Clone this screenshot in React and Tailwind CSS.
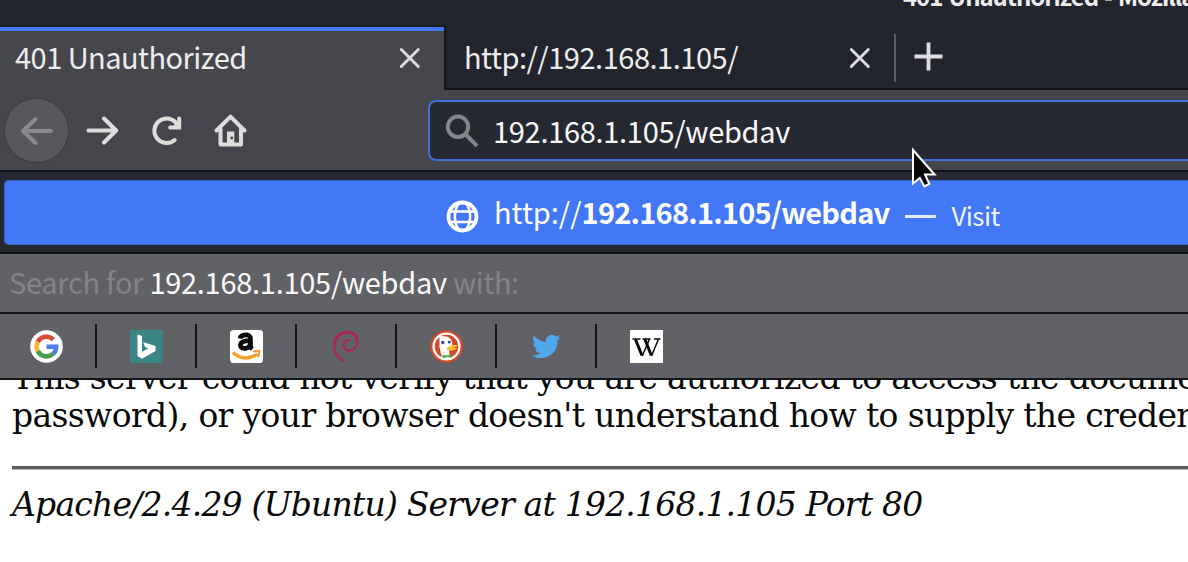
import React from "react";

const ui = "font-['Noto_Sans_CJK_SC','Noto_Sans',sans-serif]";

function Cross() {
  return (
    <svg width="22" height="22" viewBox="0 0 22 22" fill="none" stroke="#dcdcdd" strokeWidth="2.9" strokeLinecap="round">
      <path d="M2.3 2.5 19.3 19.5M19.3 2.5 2.3 19.5" />
    </svg>
  );
}

function TitleBar() {
  return (
    <div className={`h-[25px] overflow-hidden bg-[#23252e] pl-[903px] text-[24px] font-bold leading-[36px] tracking-[-1.05px] [word-spacing:1.5px] text-[#eeeeef] ${ui}`}>
      <div className="-mt-[22px] whitespace-nowrap">401 Unauthorized - Mozilla Firefox</div>
    </div>
  );
}

function Tabs() {
  return (
    <div className={`flex h-[65px] bg-[#23252e] text-[29px] leading-[40px] text-[#ededee] ${ui}`}>
      <div className="flex h-[65px] w-[444px] shrink-0 flex-col border-t-2 border-[#1b1c22] bg-[#45474c]">
        <div className="h-[4px] shrink-0 bg-[#4379f6]" />
        <div className="flex items-start justify-between pl-[15px] pr-[23px] pt-[5px]">
          <span className="whitespace-nowrap tracking-[-0.53px]">401 Unauthorized</span>
          <div className="pt-[11px]"><Cross /></div>
        </div>
      </div>
      <div className="flex grow border-b-2 border-l-2 border-[#15161b]">
        <div className="flex h-[62px] w-[425px] items-start justify-between pl-[18px] pt-[11px]">
          <span className="whitespace-nowrap tracking-[-0.48px]">http://192.168.1.105/</span>
          <div className="pt-[11px]"><Cross /></div>
        </div>
        <div className="ml-[23px] mt-[9px] h-[48px] w-[2px] bg-[#5b5d63]" />
        <svg className="ml-[18px] mt-[17px]" width="30" height="30" viewBox="0 0 30 30" stroke="#dededf" strokeWidth="3.8">
          <path d="M14.500 .5v28M.5 14.500h28" />
        </svg>
      </div>
    </div>
  );
}

function Toolbar() {
  return (
    <div className={`flex h-[80px] items-start bg-[#44464c] ${ui}`}>
      <div className="ml-[4px] mt-[8px] flex size-[65px] shrink-0 items-center justify-center rounded-full border border-[#3b3d42] bg-[#57585c]">
        <svg width="34" height="30" viewBox="0 0 34 30" fill="none" stroke="#898a8d" strokeWidth="4" strokeLinecap="round" strokeLinejoin="round">
          <path d="M31 15H3M15.500 3 3 15l12.500 12" />
        </svg>
      </div>
      <svg className="ml-[16px] mt-[25px] shrink-0" width="34" height="31" viewBox="0 0 34 31" fill="none" stroke="#dddddc" strokeWidth="4" strokeLinecap="round" strokeLinejoin="round">
        <path d="M3.500 15.500H31M19 3.500l12.200 12L19 27.500" />
      </svg>
      <svg className="ml-[31px] mt-[24px] shrink-0" width="34" height="32" viewBox="0 0 34 32" fill="none" stroke="#dddddc" strokeWidth="4" strokeLinecap="round">
        <path d="M24.700 26A12.300 12.300 0 1 1 25.500 8.200L27.500 12" />
        <path d="M29.200 4.500v8.900H20.200" />
        <path d="M29.200 7v6.400H23.500Z" fill="#dddddc" strokeWidth="1" />
      </svg>
      <svg className="ml-[29px] mt-[23px] shrink-0" width="36" height="36" viewBox="0 0 36 36" fill="none" stroke="#dddddc" strokeWidth="4" strokeLinecap="round" strokeLinejoin="round">
        <path d="M3.500 17.500 17.500 3.700 31.500 17.500M7.500 16v15.500h20.500V16" />
        <path d="M14 31V18.500h7.300V31Z" fill="#dddddc" stroke="none" />
        <circle cx="18.800" cy="25" r="1.400" fill="#44464c" stroke="none" />
      </svg>
      <div className="ml-[179px] mt-[10px] flex h-[61px] grow items-start rounded-l-[8px] border-2 border-r-0 border-[#3f6fd9] bg-[#272932]">
        <svg className="ml-[15px] mt-[12px] shrink-0" width="34" height="34" viewBox="0 0 34 34" fill="none" stroke="#858688" strokeWidth="4">
          <circle cx="13" cy="12.800" r="10.200" />
          <path d="M20.200 20 32 31.800" />
        </svg>
        <span className="ml-[14px] mt-[8px] whitespace-nowrap text-[29px] leading-[40px] tracking-[-0.3px] text-[#f9f9fa]">192.168.1.105/webdav</span>
      </div>
    </div>
  );
}

function Suggestion() {
  return (
    <div className={`h-[84px] border-y-2 border-[#111217] bg-[#272932] pl-[4px] pt-[8px] ${ui}`}>
      <div className="flex h-[65px] items-start rounded-l-[5px] border border-r-0 border-[#3a63c4] bg-[#4277f6] text-white">
        <svg className="ml-[441px] mt-[19px] shrink-0" width="33" height="33" viewBox="0 0 33 33" fill="none" stroke="#fff">
          <circle cx="16.500" cy="16.500" r="14" strokeWidth="3.800" />
          <ellipse cx="16.500" cy="16.500" rx="7.700" ry="14.500" strokeWidth="2.600" />
          <path d="M3 11.500h27M3 22h27" strokeWidth="2.300" />
        </svg>
        <span className="ml-[15px] mt-[10px] whitespace-nowrap text-[29px] leading-[40px]">http://<b className="tracking-[-0.78px]">192.168.1.105/webdav</b></span>
        <div className="ml-[16px] mt-[34px] h-[3px] w-[31px] bg-[#e3ebfe]" />
        <span className="ml-[15px] mt-[14px] text-[26px] leading-[40px] tracking-[-0.6px] text-[#eef3ff]">Visit</span>
      </div>
    </div>
  );
}

function Google() {
  return (
    <svg width="33" height="33" viewBox="0 0 33 33" fill="none" strokeWidth="4.600">
      <circle cx="16.500" cy="16.500" r="16.300" fill="#fff" />
      <path d="M7.800 11.900A9.800 9.800 0 0 1 23.400 9.600" stroke="#d8483b" />
      <path d="M7.800 21.100A9.800 9.800 0 0 1 7.800 11.900" stroke="#f2b632" />
      <path d="M23.100 23.700A9.800 9.800 0 0 1 7.800 21.100" stroke="#489e4d" />
      <path d="M16.500 16.700h9.700A9.800 9.800 0 0 1 23.100 23.900" stroke="#4a7eea" />
    </svg>
  );
}

function Bing() {
  return (
    <svg width="33" height="33" viewBox="0 0 33 33">
      <path fill="#3b8585" d="M0 0h33v33H0z" />
      <path fill="#fff" d="M7.500 4.500 12 6v15.800l6.200-3.400-3-1.500-2.100-5L25.500 16v5L12 28.700 7.500 26z" />
    </svg>
  );
}

function Amazon() {
  return (
    <svg width="33" height="33" viewBox="0 0 33 33" fill="none">
      <rect width="33" height="33" rx="3.500" fill="#fff" />
      <path d="M10 8.400C11 3.900 20.500 3.200 20.500 8.700V15.500q0 2 1.800 3.500M20 10.700C14.500 10.600 10.400 11.700 10.400 15.300c0 4.600 9.500 4.300 10.100-2" stroke="#080808" strokeWidth="4.700" />
      <path d="M3 22.500C10 29.500 20 29.500 27.500 24" stroke="#f3a02f" strokeWidth="3.400" />
      <path d="M23.500 21.800C26 20.700 28.200 20.700 29.500 21.500 29.500 23.800 28.800 25.500 27.500 27" stroke="#f3a02f" strokeWidth="2.200" />
    </svg>
  );
}

function Debian() {
  return (
    <svg width="33" height="33" viewBox="0 0 33 33" fill="none" stroke="#ad2555" strokeLinecap="round">
      <path strokeWidth="2" d="M13.500 31C7 27.500 3.500 21 4.500 13.500" />
      <path strokeWidth="3" d="M4.700 13.500C5.700 6.500 11 2.200 17 2.200c6.500 0 10 3.500 10 8.500" />
      <path strokeWidth="2" d="M27.500 10.700c0 6.500-4 10.500-9 10-4.500-.4-6-4.200-4.700-7.500 1-2.500 3.200-3.600 5.500-3.200M16.500 20C13.500 18.500 12.600 15 14 12" />
    </svg>
  );
}

function Duck() {
  return (
    <svg width="33" height="33" viewBox="0 0 33 33">
      <circle cx="16.500" cy="16.500" r="16.300" fill="#d5482b" />
      <circle cx="16.500" cy="16.500" r="12.900" fill="#d5482b" stroke="#fff" strokeWidth="2.300" />
      <path fill="#fff" d="M9.500 7.800 8 5.500l5.500.7c5-.2 8.500 2.800 8.800 7.800l-1 4.500-2.300 3 1.500 7.500c-3.500 1-6.500.3-8.500-1L9.500 17z" />
      <circle cx="12.800" cy="12.500" r="1.700" fill="#2f4f8d" />
      <circle cx="19.300" cy="12" r="1.500" fill="#2f4f8d" />
      <path fill="#f4bf31" d="M17 17.500c2-1.500 4-1.500 5.500-2.800 2 .5 4 0 5.800.3-1 1.600-3 2-5 2.900l4.200.2c-1.500 2.300-7 3.600-10.500 2z" />
      <path fill="#59ac40" d="m12.500 24.500 4 1 4.500-1.500.8 3.800-4.500-.7-4.500 1.500z" />
    </svg>
  );
}

function Twitter() {
  return (
    <svg width="33" height="33" viewBox="0 0 24 24" fill="#50a8ec">
      <path transform="translate(-1.500 -1.500) scale(1.090)" d="M21.700 6.200c-.7.300-1.400.5-2.200.6.800-.5 1.400-1.200 1.700-2.100-.7.400-1.600.8-2.500 1A4 4 0 0 0 12 9.300c-3.200-.2-6.100-1.700-8-4.100-1.100 1.900-.5 4.100 1.200 5.300-.6 0-1.200-.2-1.800-.5 0 1.900 1.300 3.500 3.100 3.900-.6.200-1.200.2-1.800.1.500 1.600 1.900 2.700 3.700 2.700A8 8 0 0 1 2.500 18.400 11.200 11.200 0 0 0 19.700 8.300c.8-.6 1.500-1.300 2-2.100Z" />
    </svg>
  );
}

function Wiki() {
  return (
    <svg width="33" height="33" viewBox="0 0 33 33" fill="none" stroke="#080808">
      <path fill="#fff" stroke="none" d="M0 0h33v33H0z" />
      <path strokeWidth="1.500" d="M2.500 9h8M12.500 9h8M24 9h6.500M12.300 26l7-16.500M21.500 26 28.300 9.500" />
      <path strokeWidth="3" d="M5.500 9.500 12 25.500M15 9.500l6.300 16" />
    </svg>
  );
}

const engines = [Google, Bing, Amazon, Debian, Duck, Twitter, Wiki];

function Search() {
  return (
    <div className="bg-[#616266]">
      <div className={`h-[58px] whitespace-nowrap border-t border-[#6a6b6f] pl-[9px] pt-[6px] text-[29px] leading-[40px] tracking-[-0.28px] text-[#838487] ${ui}`}>
        Search for <span className="text-[#fafafa]">192.168.1.105/webdav</span><span className="tracking-[-0.4px]"> with:</span>
      </div>
      <div className="flex h-[68px] items-start border-y-2 border-[#15161b]">
        {engines.map((Icon, i) => (
          <div key={i} className={i === 0 ? "mt-[10px] flex h-[44px] w-[95px] items-center pl-[30px]" : "mt-[10px] flex h-[44px] w-[100px] items-center border-l-2 border-[#15161b] pl-[33px]"}>
            <Icon />
          </div>
        ))}
      </div>
    </div>
  );
}

function Page() {
  return (
    <div className="h-[182px] overflow-hidden bg-white pl-[12px] font-['DejaVu_Serif',serif] text-[33px] leading-[38px] text-[#080808]">
      <div className="-mt-[21px] whitespace-nowrap tracking-[-0.69px]">This server could not verify that you are authorized to access the document requested.</div>
      <div className="whitespace-nowrap tracking-[-0.65px]">password), or your browser doesn't understand how to supply the credentials required.</div>
      <div className="mt-[31px] h-[4px] border-b border-[#b5b5b5] bg-[#5e5e5e]" />
      <div className="mt-[16px] whitespace-nowrap italic tracking-[-0.78px]">Apache/2.4.29 (Ubuntu) Server at 192.168.1.105 Port 80</div>
    </div>
  );
}

export default function App() {
  return (
    <div className="relative h-[562px] w-[1188px] overflow-hidden bg-white">
      <TitleBar />
      <Tabs />
      <Toolbar />
      <Suggestion />
      <Search />
      <Page />
      <svg className="absolute left-[911px] top-[147px]" width="28" height="42" viewBox="0 0 28 42">
        <path d="M2 3v33.500l6.800-5.500 4.500 8.300 5-2.500-4.300-9.300h9.600Z" fill="#080808" stroke="#fff" strokeWidth="2" />
      </svg>
    </div>
  );
}
